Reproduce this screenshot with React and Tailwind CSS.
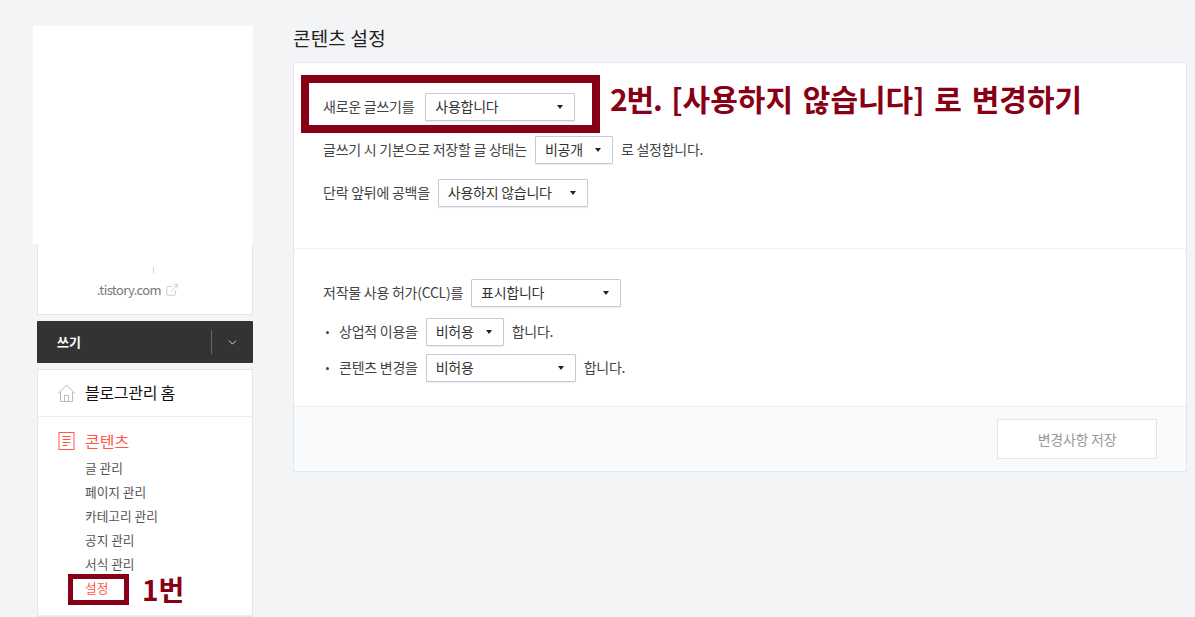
import { ChevronDown, ExternalLink } from 'lucide-react';

const font = { fontFamily: '"Noto Sans CJK KR", "Noto Sans", sans-serif' };

// Row text sits 1px above the center of its select
const Label = ({ children }) => <span className="-mt-[2px]">{children}</span>;

// Select box
const Select = ({ label, width }) => (
  <div className={`flex h-[28px] items-center justify-between rounded-[1px] border border-[#c5cad8] bg-white pl-[9px] pr-[11px] text-[14px] tracking-[-0.25px] text-[#333] shadow-[0_1px_1px_rgba(0,0,0,0.08)] ${width}`}>
    <Label>{label}</Label>
    <span className="-mt-[1px] h-0 w-0 border-x-[3.5px] border-t-[4px] border-x-transparent border-t-[#222]" />
  </div>
);

const SubItem = ({ children, active }) => (
  <li className={`h-[24px] leading-[24px] ${active ? 'text-[#ff5544]' : 'text-[#555]'}`}>{children}</li>
);

export default function App() {
  return (
    <div style={font} className="relative flex h-[617px] w-[1195px] overflow-hidden bg-[#f3f4f6]">
      {/* Sidebar */}
      <aside className="ml-[37px] mt-[26px] w-[216px]">
        <div className="relative h-[289px] border border-[#e4e6ee] bg-white">
          <div className="absolute -left-[5px] -top-px h-[218px] w-[220px] bg-white" />
          <div className="absolute left-[115px] top-[240px] h-[6px] w-px bg-[#c4d8e4]" />
          <div className="absolute left-[59px] top-[253px] flex items-center gap-[4px] text-[13px] tracking-[-0.6px] text-[#777]">
            <span>.tistory.com</span>
            <ExternalLink className="h-[14px] w-[14px] text-[#aaa]" strokeWidth={1} />
          </div>
        </div>

        <div className="mt-[6px] flex h-[42px] items-center rounded-[1px] bg-[#333] text-white">
          <span className="ml-[20px] flex-1 text-[13px] font-bold">쓰기</span>
          <span className="h-[24px] w-px bg-[#666]" />
          <ChevronDown className="mx-[14px] h-[13px] w-[13px] text-[#eee]" strokeWidth={1.6} />
        </div>

        <div className="mt-[6px] border border-[#e4e6ee] bg-white">
          <div className="flex h-[47px] items-center border-b border-[#eceef3] pl-[19px] text-[16px] tracking-[-0.3px] text-[#111]">
            <svg width="19" height="18" viewBox="0 0 19 18" fill="none" stroke="#bbb" strokeWidth="1" className="mr-[9px]">
              <path d="M1 9.5 9.5 1 18 9.5" />
              <path d="M3.5 8v9.5h12V8" />
              <path d="M7.5 17.5V11.5h4v6" />
            </svg>
            <Label>블로그관리 홈</Label>
          </div>
          <div className="h-[199px] border-b border-[#eceef3] pl-[20px] pt-[12px]">
            <div className="flex h-[24px] items-center text-[16px] text-[#ff5544]">
              <svg width="17" height="18" viewBox="0 0 17 18" fill="none" stroke="#ff5544" strokeWidth="1" className="mr-[10px]">
                <rect x="1" y="0.5" width="15" height="17" />
                <path d="M4.5 4.5h8M4.5 7.5h8M4.5 10.5h8M4.5 13.5h5" />
              </svg>
              콘텐츠
            </div>
            <ul className="ml-[27px] mt-[3px] text-[12.7px]">
              <SubItem>글 관리</SubItem>
              <SubItem>페이지 관리</SubItem>
              <SubItem>카테고리 관리</SubItem>
              <SubItem>공지 관리</SubItem>
              <SubItem>서식 관리</SubItem>
              <SubItem active>설정</SubItem>
            </ul>
          </div>
        </div>
      </aside>

      {/* Main */}
      <main className="ml-[40px] mt-[26px] w-[894px]">
        <h2 className="h-[36px] text-[19px] leading-[24px] tracking-[0.2px] text-[#222]">콘텐츠 설정</h2>
        <div className="h-[410px] border border-[#e4e6ee] bg-white text-[14px] tracking-[-0.25px] text-[#444]">
          <div className="h-[186px] border-b border-[#eff0f4] pl-[29px] pt-[30px]">
            <div className="flex h-[28px] items-center">
              <Label>새로운 글쓰기를</Label>
              <div className="ml-[11px]"><Select label="사용합니다" width="w-[150px]" /></div>
            </div>
            <div className="mt-[15px] flex h-[28px] items-center">
              <Label>글쓰기 시 기본으로 저장할 글 상태는</Label>
              <div className="mx-[8px]"><Select label="비공개" width="w-[78px]" /></div>
              <Label>로 설정합니다.</Label>
            </div>
            <div className="mt-[15px] flex h-[28px] items-center">
              <Label>단락 앞뒤에 공백을</Label>
              <div className="ml-[8px]"><Select label="사용하지 않습니다" width="w-[150px]" /></div>
            </div>
          </div>

          <div className="h-[158px] border-b border-[#eff0f4] pl-[29px] pt-[30px]">
            <div className="flex h-[28px] items-center">
              <Label>저작물 사용 허가(CCL)를</Label>
              <div className="ml-[8px]"><Select label="표시합니다" width="w-[150px]" /></div>
            </div>
            <div className="mt-[11px] flex h-[28px] items-center">
              <span className="ml-[3px] mr-[10px] h-[3px] w-[3px] rounded-full bg-[#444]" />
              <Label>상업적 이용을</Label>
              <div className="mx-[8px]"><Select label="비허용" width="w-[78px]" /></div>
              <Label>합니다.</Label>
            </div>
            <div className="mt-[8px] flex h-[28px] items-center">
              <span className="ml-[3px] mr-[10px] h-[3px] w-[3px] rounded-full bg-[#444]" />
              <Label>콘텐츠 변경을</Label>
              <div className="mx-[8px]"><Select label="비허용" width="w-[150px]" /></div>
              <Label>합니다.</Label>
            </div>
          </div>

          <div className="flex h-[64px] items-start justify-end bg-[#f9fafc] pr-[29px] pt-[12px]">
            <button className="h-[40px] w-[160px] border border-[#e4e6ee] bg-white text-[14px] tracking-[-0.25px] text-[#999]">변경사항 저장</button>
          </div>
        </div>
      </main>

      {/* Annotations */}
      <div className="absolute left-[301px] top-[75px] h-[58px] w-[299px] border-[8px] border-[#880015]" />
      <div className="absolute left-[610px] top-[76px] text-[30px] font-bold leading-[44px] text-[#880015] [word-spacing:3px]">
        <span className="tracking-[-1.2px]">2번.</span> [사용하지 않습니다] 로 변경하기
      </div>
      <div className="absolute left-[68px] top-[574px] h-[31px] w-[61px] border-[5px] border-[#880015]" />
      <div className="absolute left-[142px] top-[568px] text-[28px] font-bold leading-[42px] text-[#880015]">1번</div>
    </div>
  );
}
